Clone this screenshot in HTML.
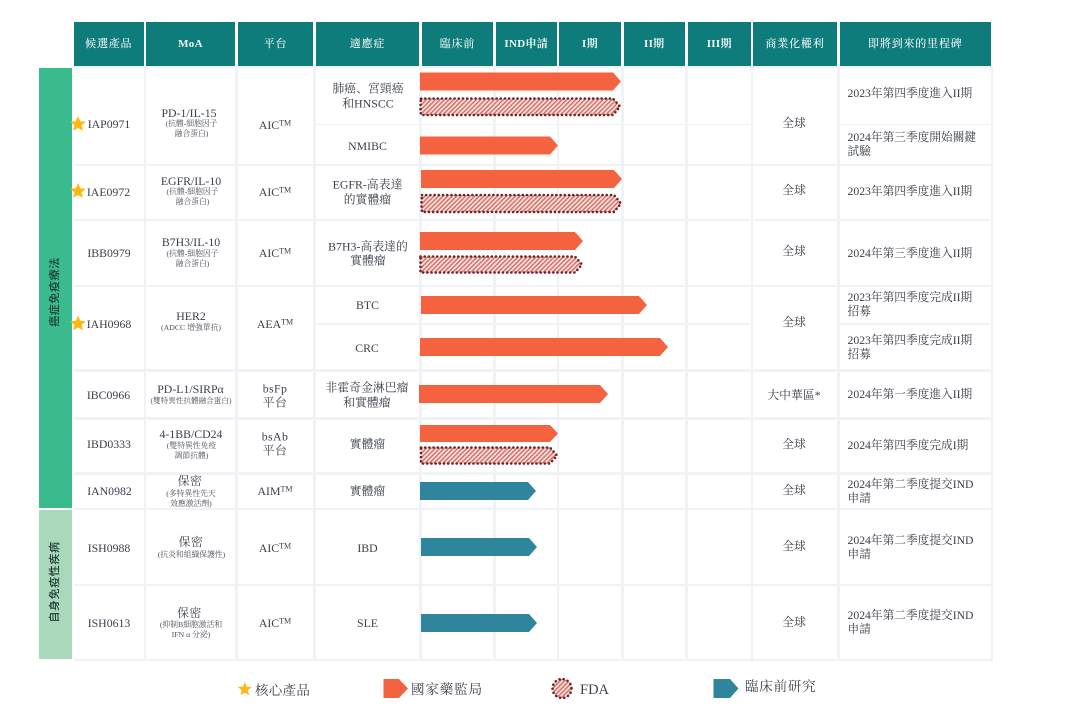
<!DOCTYPE html>
<html><head><meta charset="utf-8"><style>
html,body{margin:0;padding:0;background:#fff}
#p{position:relative;width:1080px;height:714px;overflow:hidden;background:#fff;font-family:"Liberation Serif","Noto Serif CJK SC",serif;color:#3a3f4a;filter:blur(.3px)}
.b{position:absolute}
.h{position:absolute;top:21.5px;height:44px;background:#0f7c7c;color:#f2f9f8;font-size:11px;line-height:44px;text-align:center;letter-spacing:.8px;font-weight:500}
.h b{font-weight:700;letter-spacing:.3px}
.w{position:absolute;background:#fff}
.t{position:absolute;transform:translate(-50%,-50%);white-space:nowrap;text-align:center;font-size:11.8px;line-height:14.500px}
.c{letter-spacing:.05px}
.s{position:absolute;margin-top:1.200px;transform:translate(-50%,-50%);white-space:nowrap;text-align:center;font-size:7.800px;line-height:10px;color:#4d525c}
.m{position:absolute;left:847.5px;transform:translateY(-50%);font-size:11.700px;line-height:14px;white-space:nowrap}
sup{font-size:8px;line-height:0;vertical-align:3.5px}
.v{position:absolute;transform:translate(-50%,-50%) rotate(-90deg);font-size:11px;letter-spacing:.6px;color:#1f3a35;white-space:nowrap;font-family:"Liberation Sans","Noto Sans CJK SC",sans-serif;font-weight:500}
svg{position:absolute;left:0;top:0}
</style></head><body><div id="p">
<div class="b" style="left:74px;top:66px;width:919px;height:595px;background:#f1f2f5"></div>
<div class="b" style="left:39px;top:68px;width:33px;height:439.5px;background:#3abb8e"></div>
<div class="b" style="left:39px;top:510px;width:33px;height:148.5px;background:#a9d9ba"></div>
<div class="v" style="left:54px;top:292px">癌症免疫療法</div>
<div class="v" style="left:54px;top:582px">自身免疫性疾病</div>

<div class="h" style="left:74px;width:69.5px">候選產品</div>
<div class="h" style="left:146px;width:89px"><b>MoA</b></div>
<div class="h" style="left:238px;width:75px">平台</div>
<div class="h" style="left:316px;width:103px">適應症</div>
<div class="h" style="left:422px;width:71px">臨床前</div>
<div class="h" style="left:495.5px;width:61.5px"><b>IND申請</b></div>
<div class="h" style="left:559px;width:62px"><b>I期</b></div>
<div class="h" style="left:623.5px;width:61.5px"><b>II期</b></div>
<div class="h" style="left:687.5px;width:63.5px"><b>III期</b></div>
<div class="h" style="left:753px;width:84px">商業化權利</div>
<div class="h" style="left:839.5px;width:151.5px">即將到來的里程碑</div>

<!-- col1-3 cells -->
<div class="w" style="left:74px;top:68px;width:69.5px;height:95.5px"></div><div class="w" style="left:146px;top:68px;width:89px;height:95.5px"></div><div class="w" style="left:238px;top:68px;width:75px;height:95.5px"></div>
<div class="w" style="left:74px;top:166px;width:69.5px;height:53px"></div><div class="w" style="left:146px;top:166px;width:89px;height:53px"></div><div class="w" style="left:238px;top:166px;width:75px;height:53px"></div>
<div class="w" style="left:74px;top:221px;width:69.5px;height:64px"></div><div class="w" style="left:146px;top:221px;width:89px;height:64px"></div><div class="w" style="left:238px;top:221px;width:75px;height:64px"></div>
<div class="w" style="left:74px;top:287px;width:69.5px;height:82px"></div><div class="w" style="left:146px;top:287px;width:89px;height:82px"></div><div class="w" style="left:238px;top:287px;width:75px;height:82px"></div>
<div class="w" style="left:74px;top:372px;width:69.5px;height:45px"></div><div class="w" style="left:146px;top:372px;width:89px;height:45px"></div><div class="w" style="left:238px;top:372px;width:75px;height:45px"></div>
<div class="w" style="left:74px;top:420px;width:69.5px;height:52px"></div><div class="w" style="left:146px;top:420px;width:89px;height:52px"></div><div class="w" style="left:238px;top:420px;width:75px;height:52px"></div>
<div class="w" style="left:74px;top:474.5px;width:69.5px;height:33px"></div><div class="w" style="left:146px;top:474.5px;width:89px;height:33px"></div><div class="w" style="left:238px;top:474.5px;width:75px;height:33px"></div>
<div class="w" style="left:74px;top:510px;width:69.5px;height:73.5px"></div><div class="w" style="left:146px;top:510px;width:89px;height:73.5px"></div><div class="w" style="left:238px;top:510px;width:75px;height:73.5px"></div>
<div class="w" style="left:74px;top:586px;width:69.5px;height:72.5px"></div><div class="w" style="left:146px;top:586px;width:89px;height:72.5px"></div><div class="w" style="left:238px;top:586px;width:75px;height:72.5px"></div>

<!-- col4 -->
<div class="w" style="left:316px;top:68px;width:103px;height:55.5px"></div>
<div class="w" style="left:316px;top:125px;width:103px;height:38.5px"></div>
<div class="w" style="left:316px;top:166px;width:103px;height:53px"></div>
<div class="w" style="left:316px;top:221px;width:103px;height:64px"></div>
<div class="w" style="left:316px;top:287px;width:103px;height:36px"></div>
<div class="w" style="left:316px;top:325px;width:103px;height:44px"></div>
<div class="w" style="left:316px;top:372px;width:103px;height:45px"></div>
<div class="w" style="left:316px;top:420px;width:103px;height:52px"></div>
<div class="w" style="left:316px;top:474.5px;width:103px;height:33px"></div>
<div class="w" style="left:316px;top:510px;width:103px;height:73.5px"></div>
<div class="w" style="left:316px;top:586px;width:103px;height:72.5px"></div>

<!-- phase columns -->
<div id="phase">
<div class="w" style="left:422px;top:68px;width:71px;height:55.5px"></div><div class="w" style="left:495.5px;top:68px;width:61.5px;height:55.5px"></div><div class="w" style="left:559px;top:68px;width:62px;height:55.5px"></div><div class="w" style="left:623.5px;top:68px;width:61.5px;height:55.5px"></div><div class="w" style="left:687.5px;top:68px;width:63.5px;height:55.5px"></div>
<div class="w" style="left:422px;top:125px;width:71px;height:38.5px"></div><div class="w" style="left:495.5px;top:125px;width:61.5px;height:38.5px"></div><div class="w" style="left:559px;top:125px;width:62px;height:38.5px"></div><div class="w" style="left:623.5px;top:125px;width:61.5px;height:38.5px"></div><div class="w" style="left:687.5px;top:125px;width:63.5px;height:38.5px"></div>
<div class="w" style="left:422px;top:166px;width:71px;height:53px"></div><div class="w" style="left:495.5px;top:166px;width:61.5px;height:53px"></div><div class="w" style="left:559px;top:166px;width:62px;height:53px"></div><div class="w" style="left:623.5px;top:166px;width:61.5px;height:53px"></div><div class="w" style="left:687.5px;top:166px;width:63.5px;height:53px"></div>
<div class="w" style="left:422px;top:221px;width:71px;height:64px"></div><div class="w" style="left:495.5px;top:221px;width:61.5px;height:64px"></div><div class="w" style="left:559px;top:221px;width:62px;height:64px"></div><div class="w" style="left:623.5px;top:221px;width:61.5px;height:64px"></div><div class="w" style="left:687.5px;top:221px;width:63.5px;height:64px"></div>
<div class="w" style="left:422px;top:287px;width:71px;height:36px"></div><div class="w" style="left:495.5px;top:287px;width:61.5px;height:36px"></div><div class="w" style="left:559px;top:287px;width:62px;height:36px"></div><div class="w" style="left:623.5px;top:287px;width:61.5px;height:36px"></div><div class="w" style="left:687.5px;top:287px;width:63.5px;height:36px"></div>
<div class="w" style="left:422px;top:325px;width:71px;height:44px"></div><div class="w" style="left:495.5px;top:325px;width:61.5px;height:44px"></div><div class="w" style="left:559px;top:325px;width:62px;height:44px"></div><div class="w" style="left:623.5px;top:325px;width:61.5px;height:44px"></div><div class="w" style="left:687.5px;top:325px;width:63.5px;height:44px"></div>
<div class="w" style="left:422px;top:372px;width:71px;height:45px"></div><div class="w" style="left:495.5px;top:372px;width:61.5px;height:45px"></div><div class="w" style="left:559px;top:372px;width:62px;height:45px"></div><div class="w" style="left:623.5px;top:372px;width:61.5px;height:45px"></div><div class="w" style="left:687.5px;top:372px;width:63.5px;height:45px"></div>
<div class="w" style="left:422px;top:420px;width:71px;height:52px"></div><div class="w" style="left:495.5px;top:420px;width:61.5px;height:52px"></div><div class="w" style="left:559px;top:420px;width:62px;height:52px"></div><div class="w" style="left:623.5px;top:420px;width:61.5px;height:52px"></div><div class="w" style="left:687.5px;top:420px;width:63.5px;height:52px"></div>
<div class="w" style="left:422px;top:474.5px;width:71px;height:33px"></div><div class="w" style="left:495.5px;top:474.5px;width:61.5px;height:33px"></div><div class="w" style="left:559px;top:474.5px;width:62px;height:33px"></div><div class="w" style="left:623.5px;top:474.5px;width:61.5px;height:33px"></div><div class="w" style="left:687.5px;top:474.5px;width:63.5px;height:33px"></div>
<div class="w" style="left:422px;top:510px;width:71px;height:73.5px"></div><div class="w" style="left:495.5px;top:510px;width:61.5px;height:73.5px"></div><div class="w" style="left:559px;top:510px;width:62px;height:73.5px"></div><div class="w" style="left:623.5px;top:510px;width:61.5px;height:73.5px"></div><div class="w" style="left:687.5px;top:510px;width:63.5px;height:73.5px"></div>
<div class="w" style="left:422px;top:586px;width:71px;height:72.5px"></div><div class="w" style="left:495.5px;top:586px;width:61.5px;height:72.5px"></div><div class="w" style="left:559px;top:586px;width:62px;height:72.5px"></div><div class="w" style="left:623.5px;top:586px;width:61.5px;height:72.5px"></div><div class="w" style="left:687.5px;top:586px;width:63.5px;height:72.5px"></div>
</div>

<!-- rights -->
<div class="w" style="left:753px;top:68px;width:84px;height:95.5px"></div>
<div class="w" style="left:753px;top:166px;width:84px;height:53px"></div>
<div class="w" style="left:753px;top:221px;width:84px;height:64px"></div>
<div class="w" style="left:753px;top:287px;width:84px;height:82px"></div>
<div class="w" style="left:753px;top:372px;width:84px;height:45px"></div>
<div class="w" style="left:753px;top:420px;width:84px;height:52px"></div>
<div class="w" style="left:753px;top:474.5px;width:84px;height:33px"></div>
<div class="w" style="left:753px;top:510px;width:84px;height:73.5px"></div>
<div class="w" style="left:753px;top:586px;width:84px;height:72.5px"></div>
<!-- milestones -->
<div class="w" style="left:839.5px;top:68px;width:151.5px;height:55.5px"></div>
<div class="w" style="left:839.5px;top:125px;width:151.5px;height:38.5px"></div>
<div class="w" style="left:839.5px;top:166px;width:151.5px;height:53px"></div>
<div class="w" style="left:839.5px;top:221px;width:151.5px;height:64px"></div>
<div class="w" style="left:839.5px;top:287px;width:151.5px;height:36px"></div>
<div class="w" style="left:839.5px;top:325px;width:151.5px;height:44px"></div>
<div class="w" style="left:839.5px;top:372px;width:151.5px;height:45px"></div>
<div class="w" style="left:839.5px;top:420px;width:151.5px;height:52px"></div>
<div class="w" style="left:839.5px;top:474.5px;width:151.5px;height:33px"></div>
<div class="w" style="left:839.5px;top:510px;width:151.5px;height:73.5px"></div>
<div class="w" style="left:839.5px;top:586px;width:151.5px;height:72.5px"></div>

<svg width="1080" height="714" viewBox="0 0 1080 714">
<defs>
<pattern id="hatch" width="3.2" height="3.2" patternUnits="userSpaceOnUse" patternTransform="rotate(45)">
<rect width="3.2" height="3.2" fill="#fbe3de"/><rect width="1.500" height="3.2" fill="#d4706a"/>
</pattern>
</defs>
<g fill="#f4623f">
<path d="M420 72.5H613L621 81.5L613 90.5H420Z"/>
<path d="M420 136.5H550L558 145.5L550 154.5H420Z"/>
<path d="M421 170H614L622 179L614 188H421Z"/>
<path d="M420 232H575L583 241L575 250H420Z"/>
<path d="M421 296H639L647 305L639 314H421Z"/>
<path d="M420 338H660L668 347L660 356H420Z"/>
<path d="M419 385H600L608 394L600 403H419Z"/>
<path d="M420 425H550L558 433.5L550 442H420Z"/>
<path d="M383.500 679H399L408 688.500L399 698H383.500Z"/>
</g>
<g fill="#2f869c">
<path d="M420 482H528L536 491L528 500H420Z"/>
<path d="M421 538H529L537 547L529 556H421Z"/>
<path d="M421 614H529L537 623L529 632H421Z"/>
<path d="M713.500 679H730L738.500 688.500L730 698H713.500Z"/>
</g>
<g fill="url(#hatch)" stroke="#6d2327" stroke-width="2.600" stroke-linecap="round" stroke-dasharray="0 4.200">
<path d="M421 98.500H613L620 106.500L613 115H421Q420 107 421 98.500Z"/>
<path d="M422 195H614L621 203.500L614 212H422Q421 204 422 195Z"/>
<path d="M420.500 256.500H575L582 264.500L575 272.500H420.500Z"/>
<path d="M421 447.500H550L557 455.500L550 463.500H421Z"/>
<circle cx="562" cy="688.500" r="9.500"/>
</g>
<g fill="#fdb813">
<path d="M78 116L80.300 121.300L85.800 121.800L81.600 125.400L82.900 130.800L78 128L73.100 130.800L74.400 125.400L70.200 121.800L75.700 121.300Z"/>
<path d="M78 183L80.300 188.300L85.800 188.800L81.600 192.400L82.900 197.800L78 195L73.100 197.800L74.400 192.400L70.200 188.800L75.700 188.300Z"/>
<path d="M78 315.500L80.300 320.800L85.800 321.300L81.600 324.900L82.900 330.300L78 327.500L73.100 330.300L74.400 324.900L70.200 321.300L75.700 320.800Z"/>
<path d="M244.800 682L246.700 686.600L251.700 687L247.900 690.200L249.100 695.200L244.800 692.600L240.500 695.200L241.700 690.200L237.900 687L242.900 686.600Z"/>
</g>
</svg>

<!-- col1 -->
<div class="t" style="left:109px;top:124px">IAP0971</div>
<div class="t" style="left:108.500px;top:192px">IAE0972</div>
<div class="t" style="left:109px;top:253px">IBB0979</div>
<div class="t" style="left:109px;top:323.500px">IAH0968</div>
<div class="t" style="left:108.500px;top:395px">IBC0966</div>
<div class="t" style="left:109px;top:444px">IBD0333</div>
<div class="t" style="left:109.500px;top:490.500px">IAN0982</div>
<div class="t" style="left:109px;top:547.500px">ISH0988</div>
<div class="t" style="left:109px;top:623px">ISH0613</div>

<!-- col2 -->
<div class="t" style="left:189px;top:112.500px">PD-1/IL-15</div>
<div class="s" style="left:191.500px;top:128px">(抗體-細胞因子<br>融合蛋白)</div>
<div class="t" style="left:191px;top:180.500px">EGFR/IL-10</div>
<div class="s" style="left:192.500px;top:196px">(抗體-細胞因子<br>融合蛋白)</div>
<div class="t" style="left:191px;top:242px">B7H3/IL-10</div>
<div class="s" style="left:192.500px;top:257.500px">(抗體-細胞因子<br>融合蛋白)</div>
<div class="t" style="left:191px;top:315.500px">HER2</div>
<div class="s" style="left:191px;top:327px">(ADCC 增強單抗)</div>
<div class="t" style="left:190.500px;top:389px">PD-L1/SIRPα</div>
<div class="s" style="left:191px;top:400px;font-size:7.600px">(雙特異性抗體融合蛋白)</div>
<div class="t" style="left:191px;top:433.500px">4-1BB/CD24</div>
<div class="s" style="left:191.500px;top:449.500px">(雙特異性免疫<br>調節抗體)</div>
<div class="t c" style="left:190px;top:481px;letter-spacing:.6px">保密</div>
<div class="s" style="left:191px;top:497.500px">(多特異性先天<br>效應激活劑)</div>
<div class="t c" style="left:191px;top:542px;letter-spacing:.6px">保密</div>
<div class="s" style="left:191.500px;top:553.500px">(抗炎和組織保護性)</div>
<div class="t c" style="left:189.500px;top:613px;letter-spacing:.6px">保密</div>
<div class="s" style="left:191px;top:629px">(抑制B細胞激活和<br>IFN α 分泌)</div>

<!-- col3 -->
<div class="t" style="left:275px;top:124.500px">AIC<sup>TM</sup></div>
<div class="t" style="left:275px;top:191.500px">AIC<sup>TM</sup></div>
<div class="t" style="left:275px;top:252.500px">AIC<sup>TM</sup></div>
<div class="t" style="left:275px;top:323.500px">AEA<sup>TM</sup></div>
<div class="t" style="left:275px;top:395.500px;letter-spacing:.4px">bsFp<br>平台</div>
<div class="t" style="left:275px;top:443.500px;letter-spacing:.4px">bsAb<br>平台</div>
<div class="t" style="left:275px;top:490.500px">AIM<sup>TM</sup></div>
<div class="t" style="left:275px;top:547.500px">AIC<sup>TM</sup></div>
<div class="t" style="left:275px;top:623px">AIC<sup>TM</sup></div>

<!-- col4 -->
<div class="t c" style="left:368px;top:96px">肺癌、宮頸癌<br>和HNSCC</div>
<div class="t" style="left:367.500px;top:145.500px">NMIBC</div>
<div class="t c" style="left:367.500px;top:192px">EGFR-高表達<br>的實體瘤</div>
<div class="t c" style="left:368px;top:253.500px">B7H3-高表達的<br>實體瘤</div>
<div class="t" style="left:367.500px;top:305px">BTC</div>
<div class="t" style="left:367px;top:347.500px">CRC</div>
<div class="t c" style="left:367px;top:395px">非霍奇金淋巴瘤<br>和實體瘤</div>
<div class="t c" style="left:367.500px;top:444px">實體瘤</div>
<div class="t c" style="left:367.500px;top:491px">實體瘤</div>
<div class="t" style="left:367.500px;top:547.500px">IBD</div>
<div class="t" style="left:367.500px;top:623px">SLE</div>

<!-- rights -->
<div class="t" style="left:794px;top:122.500px">全球</div>
<div class="t" style="left:794px;top:190px">全球</div>
<div class="t" style="left:794px;top:250.500px">全球</div>
<div class="t" style="left:794px;top:321.500px">全球</div>
<div class="t c" style="left:794px;top:395px">大中華區*</div>
<div class="t" style="left:794px;top:443.500px">全球</div>
<div class="t" style="left:794px;top:489.500px">全球</div>
<div class="t" style="left:794px;top:545.500px">全球</div>
<div class="t" style="left:794px;top:621.500px">全球</div>

<!-- milestones -->
<div class="m" style="top:94px">2023年第四季度進入II期</div>
<div class="m" style="top:145px">2024年第三季度開始關鍵<br>試驗</div>
<div class="m" style="top:192px">2023年第四季度進入II期</div>
<div class="m" style="top:253.500px">2024年第三季度進入II期</div>
<div class="m" style="top:305px">2023年第四季度完成II期<br>招募</div>
<div class="m" style="top:347.500px">2023年第四季度完成II期<br>招募</div>
<div class="m" style="top:395px">2024年第一季度進入II期</div>
<div class="m" style="top:445.500px">2024年第四季度完成I期</div>
<div class="m" style="top:491.500px">2024年第二季度提交IND<br>申請</div>
<div class="m" style="top:547.500px">2024年第二季度提交IND<br>申請</div>
<div class="m" style="top:623px">2024年第二季度提交IND<br>申請</div>

<!-- legend -->
<div class="m" style="left:255px;top:690.500px;font-size:13.500px;letter-spacing:.3px">核心產品</div>
<div class="m" style="left:411px;top:689.500px;font-size:13.500px;letter-spacing:.9px">國家藥監局</div>
<div class="m" style="left:580px;top:690px;font-size:14.500px">FDA</div>
<div class="m" style="left:745px;top:687px;font-size:13.500px;letter-spacing:.8px">臨床前研究</div>
</div></body></html>
